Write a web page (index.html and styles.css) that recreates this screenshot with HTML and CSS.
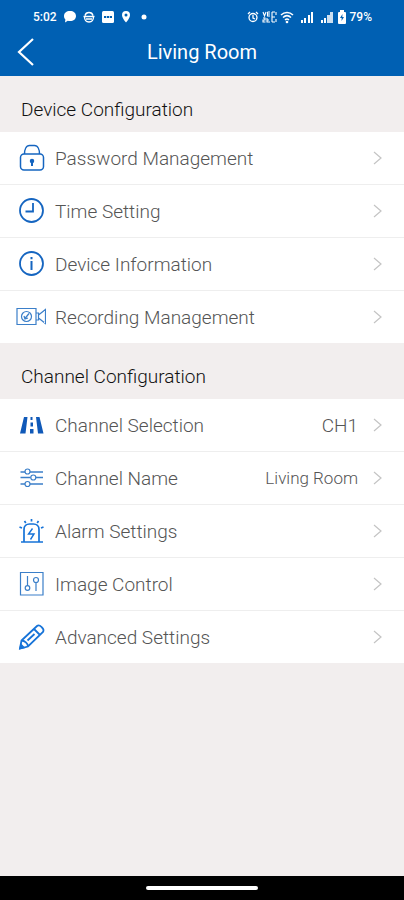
FILE: index.html
```html
<!DOCTYPE html>
<html lang="en">
<head>
<meta charset="utf-8">
<meta name="viewport" content="width=device-width, initial-scale=1">
<title>Living Room</title>
<link rel="stylesheet" href="styles.css">
</head>
<body>
<header class="top">
  <div class="status">
    <div class="status-group">
      <span>5:02</span>
      <svg width="14" height="14" viewBox="0 0 14 14"><path fill="#fff" d="M7 1c3.600 0 6 2 6 5s-2.400 5-6 5c-.8 0-1.500-.1-2.200-.3L2 12.500l.4-3C1.500 8.700 1 7.500 1 6c0-3 2.400-5 6-5z"/></svg>
      <svg width="12" height="14" viewBox="0 0 12 14" fill="none" stroke="#fff" stroke-width="1.300"><path d="M2 5.500C2.500 3.500 4 2.500 6 2.500s3.500 1 4 3M.5 6.500h11M3 9h6M1.500 6.500c0 4 2 5.500 4.500 5.500s4.500-1.500 4.500-5.500"/></svg>
      <svg width="14" height="14" viewBox="0 0 14 14"><rect x="1" y="1" width="12" height="12" rx="1.500" fill="#fff"/><path d="M3 7h8" stroke="#0060b3" stroke-width="2" stroke-dasharray="2.200 .7"/></svg>
      <svg width="10" height="14" viewBox="0 0 10 14"><path fill="#fff" fill-rule="evenodd" d="M5 1a4 4 0 0 1 4 4c0 3-4 7.500-4 7.500S1 8 1 5a4 4 0 0 1 4-4zm0 2.500a1.500 1.500 0 1 0 0 3 1.500 1.500 0 0 0 0-3z"/></svg>
      <svg class="dot" width="6" height="14" viewBox="0 0 6 14"><circle cx="3" cy="7" r="2.500" fill="#fff"/></svg>
    </div>
    <div class="status-group status-right">
      <svg width="12" height="14" viewBox="0 0 12 14" fill="none" stroke="#fff" stroke-width="1.300"><circle cx="6" cy="7.500" r="4"/><path d="M6 5v3l2 1M1 4l2-2M11 4L9 2"/></svg>
      <svg width="15" height="14" viewBox="0 0 15 14" fill="none" stroke="#fff" stroke-width="1.100"><path d="M1 2l1.500 4L4 2M5.500 2v4h2.500M5.500 4H8M5.500 2H8M1 8h2v2H1v2h2.500M5 8v4h3M5 10h2M10 2v10M10 2h3M10 7h3M10 12h3M14 2v3M14 9v3"/></svg>
      <svg width="14" height="14" viewBox="0 0 14 14" fill="none" stroke="#fff" stroke-width="1.500"><path d="M1 5c3.500-3.500 8.500-3.500 12 0M3 7.500c2.500-2.300 5.500-2.300 8 0M5 10c1.300-1.200 2.700-1.200 4 0"/><circle cx="7" cy="12" r=".6"/></svg>
      <svg class="signal" width="14" height="14" viewBox="0 0 14 14"><path fill="#fff" d="M1 10h2v3H1zM4 8h2v5H4zM8 5h2v8H8zM11 2h2v11h-2z"/></svg>
      <svg class="signal" width="14" height="14" viewBox="0 0 14 14"><path fill="#fff" d="M1 10h2v3H1zM4 8h2v5H4z"/><path fill="#fff" opacity=".8" d="M7 5h3v8H7zM10 2h3v11h-3z"/></svg>
      <svg width="10" height="14" viewBox="0 0 10 14"><path fill="#fff" d="M3 0h4v2h1q1 0 1 1v10q0 1-1 1H2q-1 0-1-1V3q0-1 1-1h1z"/><path fill="#0060b3" d="M5.500 4L3 8h1.700L4.500 11 7 7H5.300z"/></svg>
      <span>79%</span>
    </div>
  </div>
  <div class="bar">
    <button class="back" type="button" aria-label="Back"><svg width="20" height="30" viewBox="0 0 20 30"><path d="M17 2L3 15l14 13" fill="none" stroke="#fff" stroke-width="2.200"/></svg></button>
    <h1>Living Room</h1>
  </div>
</header>
<main>
  <h2>Device Configuration</h2>
  <ul>
    <li><a href="#password"><svg class="icon" viewBox="0 0 30 30"><rect x="4.500" y="11" width="23" height="16" rx="3.500"/><path d="M8.500 11c0-4 1.500-8.500 5-8.500h5c3.500 0 5 4.500 5 8.500"/><path d="M16 18v5" stroke-width="2"/><circle cx="16" cy="18" r="1.500" fill="#1565c0"/></svg><span class="label">Password Management</span><svg class="chevron" viewBox="0 0 10 16"><path d="M1 2l7 6-7 6"/></svg></a></li>
    <li><a href="#time"><svg class="icon" viewBox="0 0 30 30"><circle cx="15.500" cy="14.500" r="11.500" stroke-width="1.800"/><path d="M17 7v8.500H9.500" stroke-width="1.800"/></svg><span class="label">Time Setting</span><svg class="chevron" viewBox="0 0 10 16"><path d="M1 2l7 6-7 6"/></svg></a></li>
    <li><a href="#info"><svg class="icon" viewBox="0 0 30 30"><circle cx="15.500" cy="14.500" r="11.500" stroke-width="1.800"/><path d="M15.500 12v9M15.500 8v2.300" stroke-width="2"/></svg><span class="label">Device Information</span><svg class="chevron" viewBox="0 0 10 16"><path d="M1 2l7 6-7 6"/></svg></a></li>
    <li><a href="#recording"><svg class="icon soft" viewBox="0 0 30 30"><path d="M1 6.500h19v16H1zM20 11h2.500v7H20M22.500 13l7-5.500v14l-7-5.500"/><circle cx="10.500" cy="14.500" r="5"/><path d="M9 16.500l4-5M8 14l1 3 3-1" stroke-width="1.300"/></svg><span class="label">Recording Management</span><svg class="chevron" viewBox="0 0 10 16"><path d="M1 2l7 6-7 6"/></svg></a></li>
  </ul>
  <h2>Channel Configuration</h2>
  <ul>
    <li><a href="#channel"><svg class="icon" viewBox="0 0 30 30"><path fill="#1059b8" stroke="none" d="M8 7h3.500L9.500 23.500H4zM20 7h3.500l4 16.500H22zM14.500 7h2v3h-2zM14.500 12.500h2.500v4h-2.500zM14 19h3.500v4.500H14z"/></svg><span class="label">Channel Selection</span><span class="value">CH1</span><svg class="chevron" viewBox="0 0 10 16"><path d="M1 2l7 6-7 6"/></svg></a></li>
    <li><a href="#name"><svg class="icon soft" viewBox="0 0 30 30"><path d="M4.500 9H9M14 9h13M4.500 14.500h10M20 14.500h7M4.500 21H9M14 21h13" stroke-width="1.500"/><circle cx="11.500" cy="8.500" r="2.500"/><circle cx="17.300" cy="14.500" r="2.500"/><circle cx="11.500" cy="21" r="2.500"/></svg><span class="label">Channel Name</span><span class="value small">Living Room</span><svg class="chevron" viewBox="0 0 10 16"><path d="M1 2l7 6-7 6"/></svg></a></li>
    <li><a href="#alarm"><svg class="icon bright" viewBox="0 0 30 30"><path d="M5 26h22M8 26V13.500C8 10 10.500 8 13.500 8h4c3 0 5.500 2 5.500 5.500V26M15.500 3v2.500M8.500 5l1.300 2M22.500 5l-1.300 2M3.500 11l2.500 1M27.500 11l-2.500 1" stroke-width="1.700"/><path d="M16.500 12.500l-4 5.500h5.500l-3.500 5.500" stroke-width="1.400"/></svg><span class="label">Alarm Settings</span><svg class="chevron" viewBox="0 0 10 16"><path d="M1 2l7 6-7 6"/></svg></a></li>
    <li><a href="#image"><svg class="icon soft" viewBox="0 0 30 30"><path d="M4.500 3.500h22.500v22.500H4.500z"/><path d="M11.500 7v10M20 13v9"/><circle cx="11.500" cy="19" r="2.300"/><circle cx="20" cy="11" r="2.500"/></svg><span class="label">Image Control</span><svg class="chevron" viewBox="0 0 10 16"><path d="M1 2l7 6-7 6"/></svg></a></li>
    <li><a href="#advanced"><svg class="icon bright" viewBox="0 0 30 30"><path d="M4 26.500l1.500-8L21 4c2.500-2 8 3 6 6L12 24.500zM18 7l6 6M5.500 18.500c3 0 6.500 3 6.500 6M11.500 18.500l7-6.500" stroke-width="1.800"/><path d="M4 26.500l1-4 3 3z" fill="#1673d8"/></svg><span class="label">Advanced Settings</span><svg class="chevron" viewBox="0 0 10 16"><path d="M1 2l7 6-7 6"/></svg></a></li>
  </ul>
</main>
<footer class="nav"><div class="handle"></div></footer>
</body>
</html>
```
FILE: styles.css
```css
* { box-sizing: border-box; }
body {
  margin: 0;
  min-height: 100vh;
  display: flex;
  flex-direction: column;
  background: #f2eeee;
  font-family: Roboto, "Liberation Sans", sans-serif;
}
.top { background: #0060b3; color: #fff; padding-bottom: 6px; }
.status {
  display: flex;
  justify-content: space-between;
  height: 34px;
  padding: 0 32px 0 33px;
  font-size: 12px;
  font-weight: 500;
}
.status-group { display: flex; align-items: center; gap: 6px; }
.status-right { gap: 3px; }
.signal { margin-left: 3px; }
.dot { margin-left: 4px; }
.bar {
  display: grid;
  grid-template-columns: 52px 1fr 52px;
  align-items: center;
  height: 36px;
}
.back { border: 0; background: none; padding: 0; display: grid; place-items: center; height: 36px; }
h1 { margin: 0; font-size: 20px; font-weight: 400; text-align: center; }
main { flex: 1; }
h2 {
  margin: 0;
  padding: 12px 21px 0;
  height: 56px;
  line-height: 44px;
  font-size: 19px;
  font-weight: 300;
  color: #111;
}
ul { list-style: none; margin: 0; padding: 0; background: #fff; }
li + li { border-top: 1px solid #eee; }
a {
  display: flex;
  align-items: center;
  height: 52px;
  padding: 0 21px 0 16px;
  color: #555;
  text-decoration: none;
  font-size: 19px;
  font-weight: 300;
}
.icon { width: 30px; height: 30px; margin-right: 9px; fill: none; stroke: #1565c0; stroke-width: 1.5; }
.soft { stroke: #3b7fc9; stroke-width: 1.2; }
.bright { stroke: #1673d8; }
.label { flex: 1; }
.value { margin-right: 15px; }
.small { font-size: 17px; }
.chevron { width: 10px; height: 16px; fill: none; stroke: #c4c4c4; stroke-width: 1.2; }
.nav { height: 24px; background: #000; display: grid; place-items: center; }
.handle { width: 112px; height: 4px; border-radius: 2px; background: #fff; }
```
